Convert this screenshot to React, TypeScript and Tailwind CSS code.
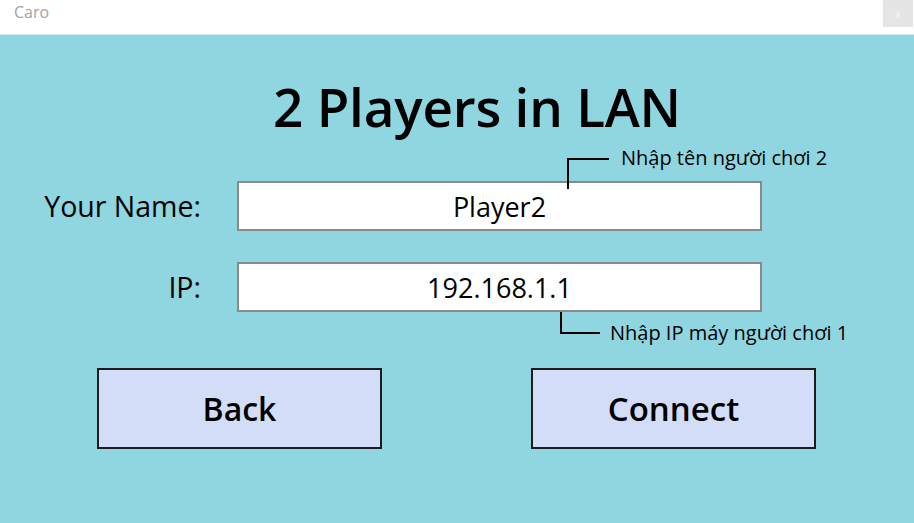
import React, { useState } from 'react'

const font = { fontFamily: '"Open Sans", "Noto Sans", sans-serif' }

export default function App() {
  const [name, setName] = useState('Player2')
  const [ip, setIp] = useState('192.168.1.1')

  return (
    <div className="w-[914px] h-[523px] bg-[#8fd6e1] flex flex-col overflow-hidden text-black" style={font}>
      {/* Title bar */}
      <div className="h-[34px] bg-white flex justify-between items-start shrink-0">
        <span className="pl-[14px] pt-[1px] text-[16px] text-[#a3a3a3] leading-[22px]">Caro</span>
        <div className="w-[30px] h-[27px] mr-[1px] bg-[#e5e5e5] flex items-center justify-center text-[13px] text-[#f4f4f4] leading-none">
          x
        </div>
      </div>
      <div className="h-px bg-[#c9eef3] shrink-0" />

      {/* Heading */}
      <h1 className="mt-[47px] pl-[40px] h-[50px] leading-[50px] text-center text-[53px] font-semibold tracking-[-0.2px]">
        2 Players in LAN
      </h1>

      {/* Form */}
      <div className="mt-[49px] flex flex-col gap-[31px]">
        <div className="flex items-center">
          <label className="w-[201px] text-right text-[28.5px] leading-none">Your Name:</label>
          <div className="relative ml-[36px]">
            <input
              value={name}
              onChange={(e) => setName(e.target.value)}
              className="w-[525px] h-[50px] bg-white border-2 border-[#8a8a8a] text-center text-[27px] outline-none"
            />
            <div className="absolute left-[330px] top-[-23px] w-[42px] h-[31px] border-l-2 border-t-2 border-black" />
            <span className="absolute left-[384px] top-[-36px] whitespace-nowrap text-[20px] leading-[26px]">
              Nhập tên người chơi 2
            </span>
          </div>
        </div>

        <div className="flex items-center">
          <label className="w-[201px] text-right text-[28.5px] leading-none">IP:</label>
          <div className="relative ml-[36px]">
            <input
              value={ip}
              onChange={(e) => setIp(e.target.value)}
              className="w-[525px] h-[50px] bg-white border-2 border-[#8a8a8a] text-center text-[27px] outline-none"
            />
            <div className="absolute left-[323px] top-[50px] w-[40px] h-[22px] border-l-2 border-b-2 border-black" />
            <span className="absolute left-[373px] top-[58px] whitespace-nowrap text-[20px] leading-[26px]">
              Nhập IP máy người chơi 1
            </span>
          </div>
        </div>
      </div>

      {/* Buttons */}
      <div className="mt-[56px] flex gap-[149px] pl-[97px]">
        <button className="w-[285px] h-[81px] bg-[#d3ddf8] border-2 border-[#1c1c1c] text-[32px] font-semibold">
          Back
        </button>
        <button className="w-[285px] h-[81px] bg-[#d3ddf8] border-2 border-[#1c1c1c] text-[33px] font-semibold">
          Connect
        </button>
      </div>
    </div>
  )
}
